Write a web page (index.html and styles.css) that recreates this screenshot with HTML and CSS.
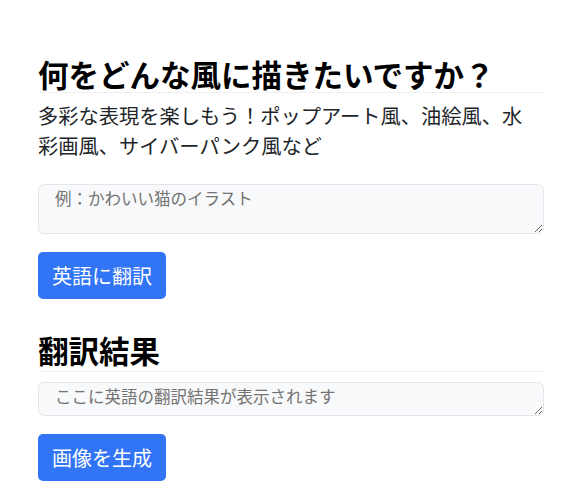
FILE: index.html
```html
<!DOCTYPE html>
<html lang="ja">
<head>
<meta charset="utf-8">
<title>画像生成</title>
<link rel="stylesheet" href="styles.css">
</head>
<body>
<main class="page">
  <section class="step">
    <h1 class="title">何をどんな風に描きたいですか？</h1>
    <p class="lead">多彩な表現を楽しもう！ポップアート風、油絵風、水彩画風、サイバーパンク風など</p>
    <textarea class="field field-prompt" placeholder="例：かわいい猫のイラスト"></textarea>
    <button class="btn" type="button">英語に翻訳</button>
  </section>
  <section class="step step-result">
    <h2 class="title">翻訳結果</h2>
    <textarea class="field field-result" placeholder="ここに英語の翻訳結果が表示されます"></textarea>
    <button class="btn" type="button">画像を生成</button>
  </section>
</main>
</body>
</html>
```

FILE: styles.css
```css
* { box-sizing: border-box; }
html, body { margin: 0; padding: 0; background: #fff; }
body {
  font-family: "Noto Sans CJK JP", "Noto Sans", sans-serif;
  color: #212529;
}
.page {
  padding: 56px 40px 0 38px;
}
.step {
  display: flex;
  flex-direction: column;
  align-items: flex-start;
}
.title {
  align-self: stretch;
  margin: 0;
  font-size: 30.5px;
  font-weight: 700;
  line-height: 36px;
  color: #000;
  padding-bottom: 0;
  border-bottom: 1px solid #f0f0f0;
}
.lead {
  margin: 8px 0 0;
  padding-right: 16px;
  font-size: 20.25px;
  line-height: 30px;
  color: #212529;
}
.field {
  align-self: stretch;
  display: block;
  font-family: inherit;
  font-size: 16.5px;
  line-height: 22px;
  color: #212529;
  background: #f8f9fa;
  border: 1px solid #e3e5e8;
  border-radius: 6px;
  padding: 2px 16px 0;
  margin: 0;
  resize: vertical;
}
.field::placeholder { color: #737373; opacity: 1; }
.field-prompt { height: 50px; margin-top: 23px; }
.field-result { height: 34px; margin-top: 10px; }
.step-result .title { padding-bottom: 3px; }
.btn {
  margin-top: 18px;
  font-family: inherit;
  font-size: 20px;
  line-height: 31px;
  padding: 8px 14px;
  color: #fff;
  background: #3174f6;
  border: none;
  border-radius: 5px;
}
.step-result { margin-top: 33px; }
```
